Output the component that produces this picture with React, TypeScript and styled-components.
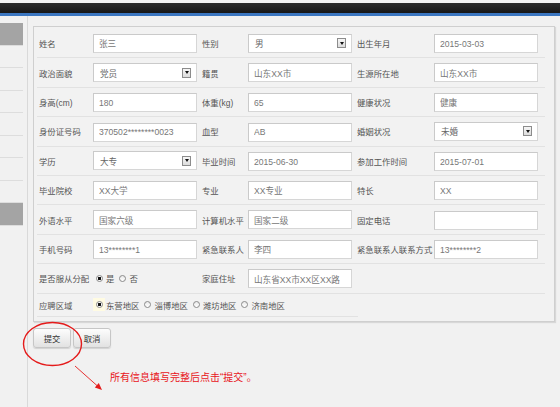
import React from 'react';
import styled, { createGlobalStyle } from 'styled-components';

const GlobalStyle = createGlobalStyle`
  html, body {
    margin: 0;
    padding: 0;
    background: #f1f1f1;
  }
  body {
    font-family: "Liberation Sans", "Noto Sans CJK SC", sans-serif;
  }
`;

const Page = styled.div`
  width: 560px;
  height: 407px;
  overflow: hidden;
  display: flex;
  flex-direction: column;
  background: #f1f1f1;
`;

const TopBar = styled.div`
  flex-shrink: 0;
  height: 10px;
  border-top: 3px solid #f4f4f4;
  border-bottom: 3px solid #3b76c0;
  background: linear-gradient(#2d2d2d, #171717);
`;

const Body = styled.div`
  flex: 1;
  display: flex;
`;

const Sidebar = styled.div`
  width: 28px;
  box-sizing: border-box;
  padding-top: 7px;
  border-right: 1px solid #d9d9d9;
`;

const NavItem = styled.div<{ $active?: boolean }>`
  width: 23px;
  height: 21.5px;
  border-bottom: 1px solid #dddddd;
  background: ${(p) => (p.$active ? '#a4a4a4' : 'transparent')};
`;

const Main = styled.div`
  flex: 1;
  padding: 10px 0 0 5px;
`;

const Panel = styled.div`
  width: 522px;
  box-sizing: border-box;
  padding: 2px 9px 4px 3px;
  border: 1px solid #cfcfcf;
  box-shadow: 1px 1px 1px #d8d8d8;
  background: #f2f2f2;
`;

const Row = styled.div<{ $short?: boolean }>`
  display: grid;
  grid-template-columns: 56px 107px 48px 107px 79px 111px;
  align-items: center;
  width: ${(p) => (p.$short ? '321px' : '508px')};
  height: ${(p) => (p.$short ? '22px' : '28.4px')};
  border-bottom: 1px solid #e2e2e2;
`;

const Label = styled.div`
  padding-left: 2px;
  font-size: 8.4px;
  color: #555;
  white-space: nowrap;
`;

const TextInput = styled.input`
  width: 104px;
  height: 19px;
  box-sizing: border-box;
  margin: 0;
  padding: 0 5px;
  border: 1px solid #d6d6d6;
  border-top-color: #cacaca;
  border-left-color: #cacaca;
  background: #fff;
  font-family: "Liberation Sans", "Noto Sans CJK SC", sans-serif;
  font-size: 8.6px;
  color: #777;
  outline: none;
`;

const SelectBox = styled.div`
  width: 104px;
  height: 19px;
  box-sizing: border-box;
  display: flex;
  align-items: center;
  justify-content: space-between;
  padding: 0 5px 0 6px;
  border: 1px solid #d6d6d6;
  border-top-color: #cacaca;
  border-left-color: #cacaca;
  background: #fff;
  font-size: 8.6px;
  color: #666;
`;

const DropButton = styled.span`
  width: 9px;
  height: 10px;
  box-sizing: border-box;
  display: flex;
  align-items: center;
  justify-content: center;
  border: 1px solid #8c8c8c;
  background: linear-gradient(#f6f6f6, #dcdcdc);

  &::after {
    content: '';
    border-left: 2.5px solid transparent;
    border-right: 2.5px solid transparent;
    border-top: 3px solid #111;
  }
`;

const RadioGroup = styled.div<{ $span?: boolean }>`
  display: flex;
  align-items: center;
  grid-column: ${(p) => (p.$span ? '2 / -1' : 'auto')};
  font-size: 8.4px;
  color: #555;
  white-space: nowrap;
`;

const Option = styled.label`
  display: flex;
  align-items: center;
  gap: 1px;
  margin-right: 2px;
`;

const DotWrap = styled.span<{ $focus?: boolean }>`
  display: flex;
  align-items: center;
  justify-content: center;
  width: 12px;
  height: 13px;
  background: ${(p) => (p.$focus ? '#fffbe2' : 'transparent')};
`;

const Dot = styled.span<{ $checked?: boolean }>`
  width: 7px;
  height: 7px;
  box-sizing: border-box;
  border-radius: 50%;
  border: 1px solid #8a8a8a;
  background: radial-gradient(circle, #111 0 1.4px, #fff 1.6px);
  background: ${(p) =>
    p.$checked ? 'radial-gradient(circle, #111 0 1.4px, #fafafa 1.7px)' : 'linear-gradient(#e9e9e9, #fff)'};
`;

const Footer = styled.div`
  position: relative;
`;

const ButtonRow = styled.div`
  display: flex;
  gap: 2px;
  margin-top: 6px;
`;

const Button = styled.button`
  width: 38px;
  height: 20px;
  padding: 0;
  border: 1px solid #c6c6c6;
  border-radius: 3px;
  background: linear-gradient(#fdfdfd, #e2e2e2);
  box-shadow: 0 1px 1px #d2d2d2;
  font-family: "Liberation Sans", "Noto Sans CJK SC", sans-serif;
  font-size: 8.4px;
  color: #333;
`;

const Note = styled.div`
  margin-top: 24px;
  padding-left: 77px;
  line-height: 12px;
  font-size: 10px;
  color: #e8141a;
`;

const Annotation = styled.svg`
  position: absolute;
  left: 0;
  top: 0;
  overflow: visible;
  pointer-events: none;
`;

type Field = {
  label: string;
  value?: string;
  select?: boolean;
  radios?: string[];
};

const rows: (Field | null)[][] = [
  [{ label: '姓名', value: '张三' }, { label: '性别', value: '男', select: true }, { label: '出生年月', value: '2015-03-03' }],
  [{ label: '政治面貌', value: '党员', select: true }, { label: '籍贯', value: '山东XX市' }, { label: '生源所在地', value: '山东XX市' }],
  [{ label: '身高(cm)', value: '180' }, { label: '体重(kg)', value: '65' }, { label: '健康状况', value: '健康' }],
  [{ label: '身份证号码', value: '370502********0023' }, { label: '血型', value: 'AB' }, { label: '婚姻状况', value: '未婚', select: true }],
  [{ label: '学历', value: '大专', select: true }, { label: '毕业时间', value: '2015-06-30' }, { label: '参加工作时间', value: '2015-07-01' }],
  [{ label: '毕业院校', value: 'XX大学' }, { label: '专业', value: 'XX专业' }, { label: '特长', value: 'XX' }],
  [{ label: '外语水平', value: '国家六级' }, { label: '计算机水平', value: '国家二级' }, { label: '固定电话', value: '' }],
  [{ label: '手机号码', value: '13********1' }, { label: '紧急联系人', value: '李四' }, { label: '紧急联系人联系方式', value: '13********2' }],
  [{ label: '是否服从分配', radios: ['是', '否'] }, { label: '家庭住址', value: '山东省XX市XX区XX路' }, null],
];

const regions = ['东营地区', '淄博地区', '潍坊地区', '济南地区'];

const FieldControl: React.FC<{ field: Field }> = ({ field }) => {
  if (field.radios) {
    return (
      <RadioGroup>
        {field.radios.map((r, i) => (
          <Option key={r}>
            <DotWrap>
              <Dot $checked={i === 0} />
            </DotWrap>
            {r}
          </Option>
        ))}
      </RadioGroup>
    );
  }
  if (field.select) {
    return (
      <SelectBox>
        <span>{field.value}</span>
        <DropButton />
      </SelectBox>
    );
  }
  return <div><TextInput readOnly value={field.value} /></div>;
};

const App: React.FC = () => {
  return (
    <Page>
      <GlobalStyle />
      <TopBar />
      <Body>
        <Sidebar>
          {Array.from({ length: 9 }).map((_, i) => (
            <NavItem key={i} $active={i === 0 || i === 8} />
          ))}
        </Sidebar>
        <Main>
          <Panel>
            {rows.map((row, ri) => (
              <Row key={ri}>
                {row.map((field, ci) =>
                  field ? (
                    <React.Fragment key={ci}>
                      <Label>{field.label}</Label>
                      <FieldControl field={field} />
                    </React.Fragment>
                  ) : (
                    <React.Fragment key={ci}>
                      <div />
                      <div />
                    </React.Fragment>
                  )
                )}
              </Row>
            ))}
            <Row $short>
              <Label>应聘区域</Label>
              <RadioGroup $span>
                {regions.map((r, i) => (
                  <Option key={r}>
                    <DotWrap $focus={i === 0}>
                      <Dot $checked={i === 0} />
                    </DotWrap>
                    {r}
                  </Option>
                ))}
              </RadioGroup>
            </Row>
          </Panel>
          <Footer>
            <ButtonRow>
              <Button>提交</Button>
              <Button>取消</Button>
            </ButtonRow>
            <Note>所有信息填写完整后点击“提交”。</Note>
            <Annotation width="120" height="70" viewBox="0 0 120 70">
              <ellipse cx="19.5" cy="16" rx="29" ry="21.5" fill="none" stroke="#e41b1b" strokeWidth="1.4" />
              <line x1="42" y1="38" x2="64.5" y2="58" stroke="#e41b1b" strokeWidth="0.9" />
              <polygon points="69,62 61.8,59.6 65.8,55.1" fill="#e41b1b" />
            </Annotation>
          </Footer>
        </Main>
      </Body>
    </Page>
  );
};

export default App;
